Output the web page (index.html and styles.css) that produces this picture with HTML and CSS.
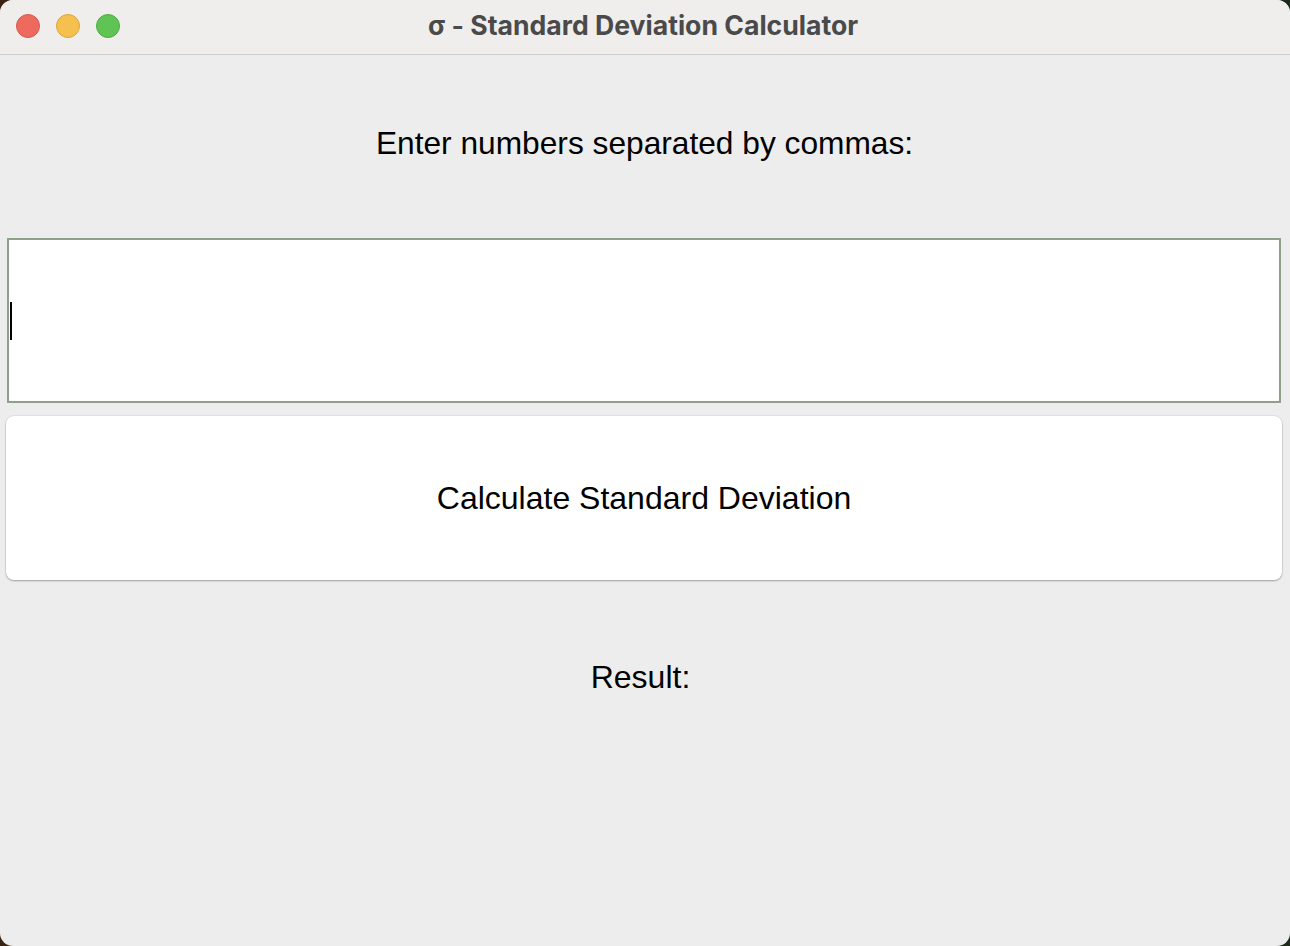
FILE: index.html
```html
<!DOCTYPE html>
<html lang="en">
<head>
<meta charset="utf-8">
<title>σ - Standard Deviation Calculator</title>
<link rel="stylesheet" href="styles.css">
</head>
<body>
<div class="window">
  <header class="titlebar">
    <div class="lights">
      <span class="light red"></span>
      <span class="light yellow"></span>
      <span class="light green"></span>
    </div>
    <div class="title">σ - Standard Deviation Calculator</div>
  </header>
  <main class="content">
    <div class="prompt">Enter numbers separated by commas:</div>
    <div class="entry"><span class="caret"></span></div>
    <div class="button">Calculate Standard Deviation</div>
    <div class="result">Result:</div>
  </main>
</div>
</body>
</html>
```
FILE: styles.css
```css
html, body {
  margin: 0;
  padding: 0;
  width: 1290px;
  height: 946px;
  overflow: hidden;
}
body {
  background: linear-gradient(to right, #3a2415 0%, #2a2418 50%, #1d2a1c 100%);
  font-family: "Liberation Sans", Arial, sans-serif;
}
.window {
  width: 1290px;
  height: 946px;
  border-radius: 13px;
  background: #ededed;
  overflow: hidden;
  display: flex;
  flex-direction: column;
}
.titlebar {
  position: relative;
  height: 54px;
  flex: none;
  background: #efeeed;
  border-bottom: 1px solid #cfcfcf;
  display: flex;
  align-items: center;
  justify-content: center;
}
.lights {
  position: absolute;
  left: 16px;
  top: 14px;
  display: flex;
  gap: 16px;
}
.light {
  width: 24px;
  height: 24px;
  border-radius: 50%;
  box-sizing: border-box;
}
.red { background: #ee6a5f; border: 1px solid #d65a50; }
.yellow { background: #f6c04f; border: 1px solid #dba63c; }
.green { background: #5fc453; border: 1px solid #4eab43; }
.title {
  font-family: Inter, "Liberation Sans", sans-serif;
  font-weight: 700;
  font-size: 26.6px;
  color: #4a4a4a;
  margin-top: -5px;
  margin-right: 4px;
}
.content {
  flex: 1;
  display: flex;
  flex-direction: column;
  align-items: stretch;
}
.prompt {
  margin-top: 69px;
  text-align: center;
  font-size: 31.7px;
  line-height: 38px;
  color: #000;
  padding-right: 1px;
}
.entry {
  margin: 76px 9px 0 7px;
  height: 165px;
  box-sizing: border-box;
  border: 2px solid #8fa08a;
  background: #fff;
  display: flex;
  align-items: center;
  padding-left: 1px;
}
.caret {
  width: 2px;
  height: 38px;
  background: #000;
}
.button {
  margin: 13px 8px 0 6px;
  height: 164px;
  background: #fff;
  border-radius: 8px;
  box-shadow: 0 1px 2px rgba(0,0,0,0.3), 0 0 0 0.5px rgba(0,0,0,0.08);
  display: flex;
  align-items: center;
  justify-content: center;
  font-size: 32px;
  color: #000;
}
.result {
  margin-top: 78px;
  text-align: center;
  font-size: 32px;
  line-height: 38px;
  color: #000;
  padding-right: 9px;
}
```
